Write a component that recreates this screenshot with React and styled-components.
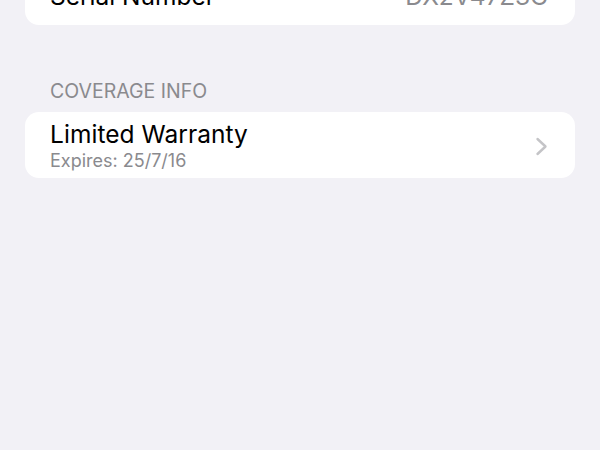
import React from "react";
import styled, { createGlobalStyle } from "styled-components";

const Global = createGlobalStyle`
  html, body { margin: 0; padding: 0; background: #f2f1f6; }
  body { font-family: Inter, "Noto Sans", sans-serif; -webkit-font-smoothing: antialiased; overflow: hidden; }
`;

const Page = styled.div`
  width: 600px;
  height: 450px;
  background: #f2f1f6;
  padding: 0 25px;
  box-sizing: border-box;
  overflow: hidden;
  display: flex;
  flex-direction: column;
`;

const Card = styled.div`
  background: #ffffff;
  border-radius: 14px;
  margin-top: ${(p) => p.$offset || 0}px;
`;

const Row = styled.div`
  display: flex;
  align-items: center;
  justify-content: space-between;
  height: ${(p) => p.$h}px;
  padding: ${(p) => p.$pt || 0}px 27px 0 25px;
  box-sizing: border-box;
`;

const Label = styled.div`
  font-size: 24.5px;
  color: #000;
`;

const Value = styled.div`
  font-size: 24.5px;
  color: #8a8a8e;
`;

const Stack = styled.div`
  display: flex;
  flex-direction: column;
  gap: 2.5px;
`;

const Title = styled.div`
  font-size: 24.5px;
  line-height: 28px;
  color: #000;
  letter-spacing: 0.05px;
`;

const Sub = styled.div`
  font-size: 18px;
  line-height: 22px;
  color: #8a8a8e;
`;

const SectionHeader = styled.div`
  font-size: 19.5px;
  line-height: 24px;
  color: #8a8a8e;
  padding: 54px 25px 9px;
`;

const Chevron = () => (
  <svg width="13" height="19" viewBox="0 0 13 19" fill="none">
    <path d="M2.5 2 L10.5 9.5 L2.5 17" stroke="#c4c4c7" strokeWidth="2.4" strokeLinecap="round" strokeLinejoin="round" />
  </svg>
);

export default function App() {
  return (
    <>
      <Global />
      <Page>
        <Card $offset={-34}>
          <Row $h={59}>
            <Label>Serial Number</Label>
            <Value>DX2V47Z3C</Value>
          </Row>
        </Card>
        <SectionHeader>COVERAGE INFO</SectionHeader>
        <Card>
          <Row $h={66} $pt={2}>
            <Stack>
              <Title>Limited Warranty</Title>
              <Sub>Expires: 25/7/16</Sub>
            </Stack>
            <Chevron />
          </Row>
        </Card>
      </Page>
    </>
  );
}
